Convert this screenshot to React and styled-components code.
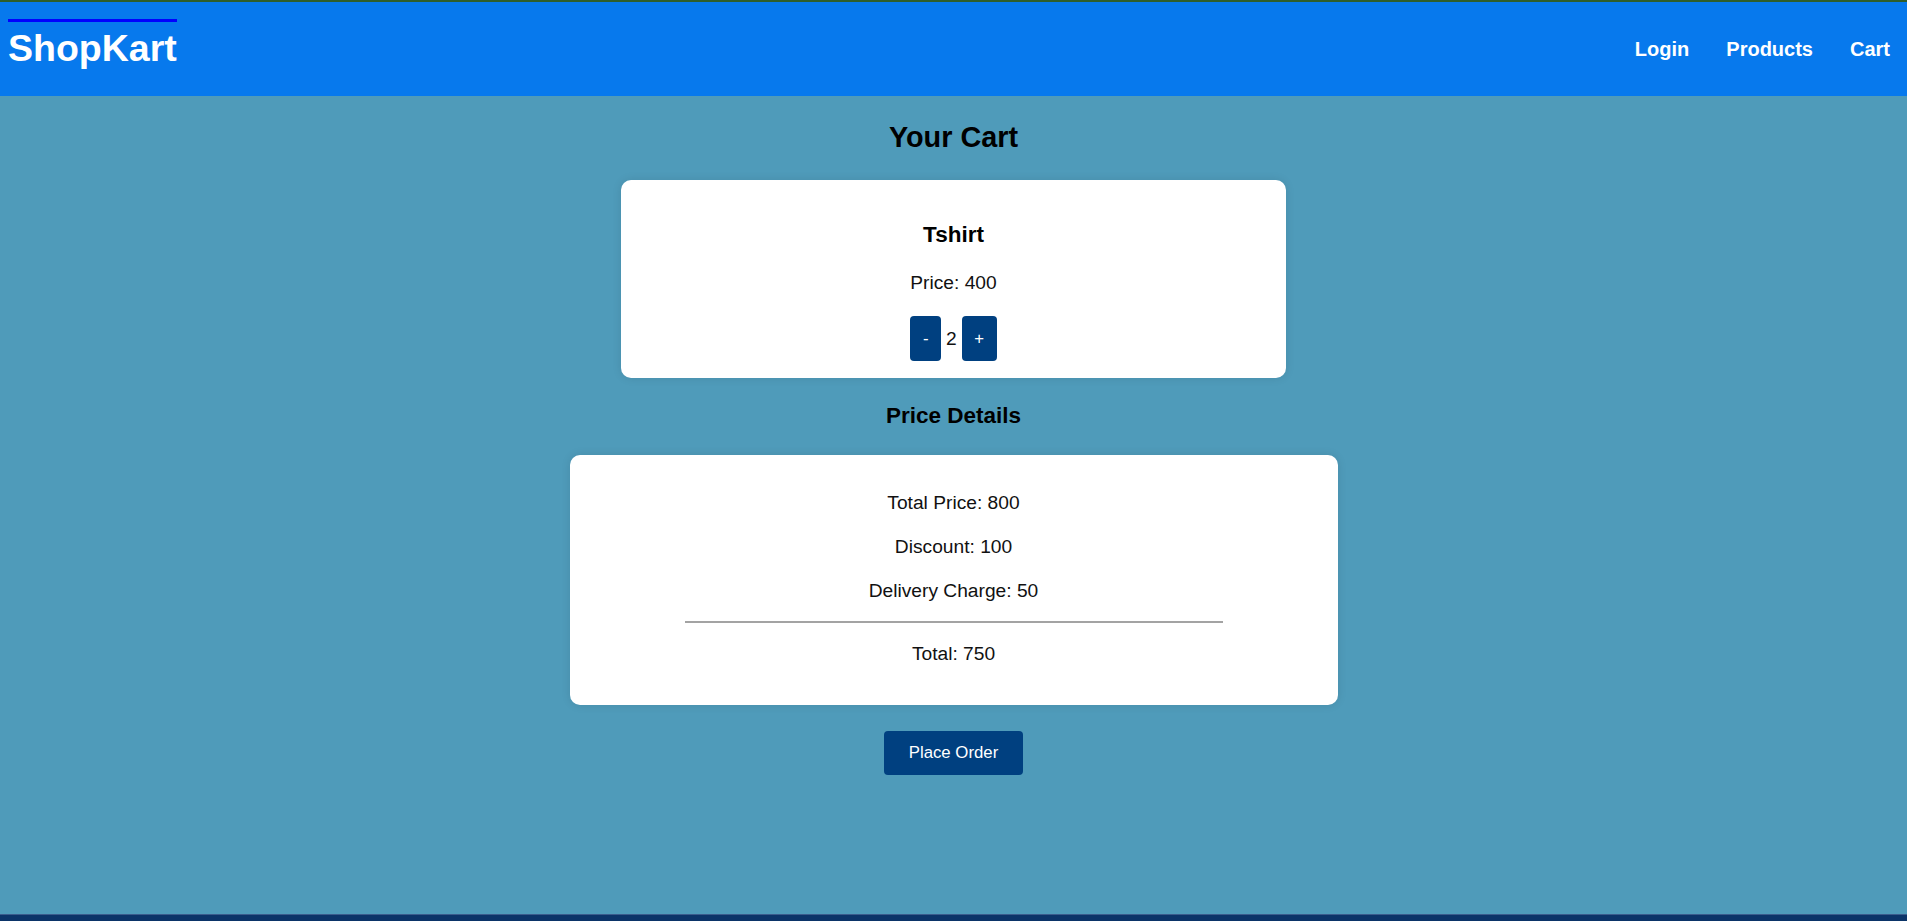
import React, {useState} from 'react'
import styled, {createGlobalStyle} from 'styled-components'

const GlobalStyle = createGlobalStyle`
    body {
        margin: 0;
        font-family: "Liberation Sans", Arial, sans-serif;
        background: #4f9bba;
    }
    * { box-sizing: border-box; }
`

const Header = styled.header`
    display: flex;
    align-items: center;
    justify-content: space-between;
    height: 96px;
    padding: 0 17px 0 8px;
    background: #0779ed;
    border-top: 2px solid #2e5e2b;
`

const Logo = styled.a`
    display: block;
    border-top: 3px solid #0000ff;
    padding: 4px 0 9px;
    font-size: 37.5px;
    line-height: 44px;
    font-weight: bold;
    color: #fff;
    text-decoration: none;
`

const Nav = styled.nav`
    display: flex;
    gap: 37px;
`

const NavLink = styled.a`
    font-size: 20px;
    line-height: 22px;
    font-weight: bold;
    color: #fff;
    text-decoration: none;
    cursor: pointer;
`

const Main = styled.main`
    display: flex;
    flex-direction: column;
    align-items: center;
    min-height: 818px;
    padding-top: 25px;
`

const PageTitle = styled.h2`
    margin: 0 0 26px;
    font-size: 28.8px;
    line-height: 33px;
    color: #000;
`

const SectionTitle = styled.h3`
    margin: ${p => p.$spaced ? '25px 0 26px' : '0'};
    font-size: 22.5px;
    line-height: 26px;
    color: #000;
`

const Card = styled.div`
    display: flex;
    flex-direction: column;
    align-items: center;
    width: ${p => p.$width}px;
    background: #fff;
    border-radius: 10px;
    box-shadow: 0 0 10px rgba(0, 0, 0, 0.1);
`

const CartCard = styled(Card)`
    padding: 42px 20px 17px;
`

const PriceCard = styled(Card)`
    padding: 37px 20px 40px;
`

const Text = styled.p`
    margin: ${p => p.$mt || 0}px 0 0;
    font-size: 19.2px;
    line-height: 22px;
    color: #111;
`

const Counter = styled.div`
    display: flex;
    align-items: center;
    gap: 5px;
    margin-top: 22px;
    font-size: 19.2px;
    color: #111;
`

const QtyButton = styled.button`
    height: 45px;
    padding: 0 12.5px;
    border: none;
    border-radius: 4px;
    background: #004080;
    color: #fff;
    font-family: inherit;
    font-size: 16.8px;
    cursor: pointer;
`

const Divider = styled.hr`
    width: 538px;
    margin: 19px 0 20px;
    border: none;
    border-top: 2px solid #a3a3a3;
`

const OrderButton = styled.button`
    margin-top: 26px;
    height: 44px;
    padding: 0 25px;
    border: none;
    border-radius: 4px;
    background: #004080;
    color: #fff;
    font-family: inherit;
    font-size: 16.8px;
    cursor: pointer;
`

const Footer = styled.footer`
    height: 40px;
    background: #0b3468;
    border-top: 1px solid #3a5c8c;
`

const App = () => {
    const [qty, setQty] = useState(2)
    const price = 400
    const discount = 100
    const delivery = 50
    const total = price * qty

    return (
        <>
            <GlobalStyle />
            <Header>
                <Logo href="#">ShopKart</Logo>
                <Nav>
                    <NavLink>Login</NavLink>
                    <NavLink>Products</NavLink>
                    <NavLink>Cart</NavLink>
                </Nav>
            </Header>
            <Main>
                <PageTitle>Your Cart</PageTitle>
                <CartCard $width={665}>
                    <SectionTitle>Tshirt</SectionTitle>
                    <Text $mt={24}>Price: {price}</Text>
                    <Counter>
                        <QtyButton onClick={() => setQty(q => Math.max(1, q - 1))}>-</QtyButton>
                        <span>{qty}</span>
                        <QtyButton onClick={() => setQty(q => q + 1)}>+</QtyButton>
                    </Counter>
                </CartCard>
                <SectionTitle $spaced>Price Details</SectionTitle>
                <PriceCard $width={768}>
                    <Text>Total Price: {total}</Text>
                    <Text $mt={22}>Discount: {discount}</Text>
                    <Text $mt={22}>Delivery Charge: {delivery}</Text>
                    <Divider />
                    <Text>Total: {total - discount + delivery}</Text>
                </PriceCard>
                <OrderButton>Place Order</OrderButton>
            </Main>
            <Footer />
        </>
    )
}

export default App
